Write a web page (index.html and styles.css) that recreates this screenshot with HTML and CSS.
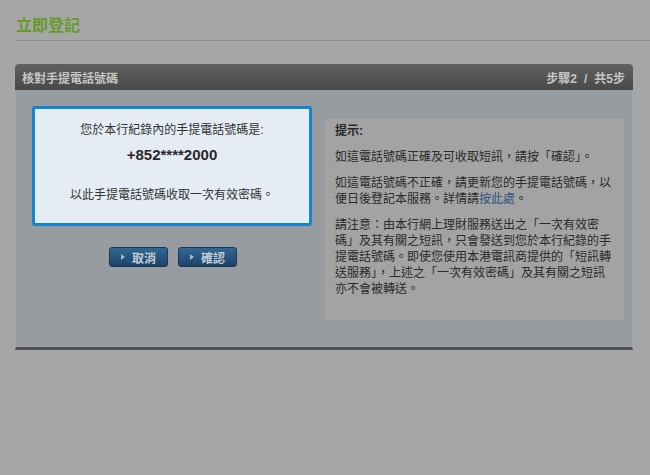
FILE: index.html
```html
<!DOCTYPE html>
<html lang="zh-Hant">
<head>
<meta charset="utf-8">
<title>立即登記</title>
<link rel="stylesheet" href="styles.css">
</head>
<body>
<div class="page">
  <h1 class="title">立即登記</h1>
  <div class="panel">
    <div class="panel-head">
      <span class="panel-title">核對手提電話號碼</span>
      <span class="panel-step">步驟2<span class="slash">/</span>共5步</span>
    </div>
    <div class="panel-body">
      <div class="left-col">
        <div class="number-box">
          <p class="nb-line">您於本行紀錄內的手提電話號碼是:</p>
          <p class="nb-phone">+852****2000</p>
          <p class="nb-line nb-last">以此手提電話號碼收取一次有效密碼。</p>
        </div>
        <div class="buttons">
          <button class="btn"><span class="tri"></span>取消</button>
          <button class="btn"><span class="tri"></span>確認</button>
        </div>
      </div>
      <div class="tips">
        <p class="tips-title">提示:</p>
        <p>如這電話號碼正確及可收取短訊，請按「確認」。</p>
        <p>如這電話號碼不正確，請更新您的手提電話號碼，以便日後登記本服務。詳情請<a class="link" href="#">按此處</a>。</p>
        <p>請注意：由本行網上理財服務送出之「一次有效密碼」及其有關之短訊，只會發送到您於本行紀錄的手提電話號碼。即使您使用本港電訊商提供的「短訊轉送服務」，上述之「一次有效密碼」及其有關之短訊亦不會被轉送。</p>
      </div>
    </div>
  </div>
</div>
</body>
</html>
```

FILE: styles.css
```css
html, body {
  margin: 0;
  padding: 0;
}
body {
  background: #a6a6a6;
  font-family: "Liberation Sans", "Noto Sans CJK TC", sans-serif;
  font-size: 12px;
  color: #2b2b2b;
  width: 650px;
  height: 475px;
  overflow: hidden;
}
.page {
  padding: 16px 0 0 15px;
}
.title {
  margin: 0;
  font-size: 16px;
  line-height: 20px;
  font-weight: bold;
  color: #679a2c;
  padding: 0 0 4px 1px;
  border-bottom: 1px solid #8e8e8e;
}
.panel {
  margin: 23px 17px 0 0;
}
.panel-head {
  height: 26px;
  border-radius: 4px 4px 0 0;
  background: linear-gradient(#606060, #494949);
  display: flex;
  align-items: center;
  justify-content: space-between;
  padding: 0 8px 0 7px;
  color: #c6c6c6;
  font-weight: bold;
  font-size: 12px;
}
.slash {
  padding: 0 7px;
}
.panel-body {
  height: 241px;
  background: #979ca0;
  border: 1px solid #a1a6aa;
  border-top: none;
  border-bottom: 3px solid #4d5054;
  display: flex;
  align-items: flex-start;
  padding: 16px 7px 0 16px;
}
.left-col {
  width: 280px;
  display: flex;
  flex-direction: column;
  align-items: center;
}
.number-box {
  width: 274px;
  height: 114px;
  border: 3px solid #1584d2;
  border-radius: 3px;
  background: #e5ecf3;
  text-align: center;
  color: #333;
}
.number-box p {
  margin: 0;
}
.nb-line {
  line-height: 16px;
  margin-top: 13px !important;
}
.nb-phone {
  font-size: 15px;
  font-weight: bold;
  line-height: 18px;
  margin-top: 8px !important;
  color: #2a2a2a;
}
.nb-last {
  margin-top: 23px !important;
}
.buttons {
  display: flex;
  gap: 10px;
  margin-top: 21px;
  padding-left: 2px;
}
.btn {
  width: 59px;
  height: 20px;
  border: 1px solid #1a3a5a;
  border-radius: 3px;
  background: linear-gradient(#336892, #1c4368);
  color: #c3ccd6;
  font-family: "Liberation Sans", "Noto Sans CJK TC", sans-serif;
  font-size: 12px;
  font-weight: bold;
  padding: 0;
  display: flex;
  align-items: center;
  justify-content: center;
  gap: 7px;
}
.tri {
  width: 0;
  height: 0;
  border-left: 4px solid #a9b5c2;
  border-top: 3px solid transparent;
  border-bottom: 3px solid transparent;
}
.tips {
  margin: 12px 0 0 12px;
  width: 279px;
  height: 197px;
  border: 1px solid #9a9a9a;
  background: #a3a3a3;
  padding: 4px 10px 0 10px;
  color: #2a2a2a;
}
.tips p {
  margin: 0 0 10px 0;
  line-height: 16px;
}
.tips .tips-title {
  font-weight: bold;
}
.link {
  color: #2f5680;
  text-decoration: none;
}
```
